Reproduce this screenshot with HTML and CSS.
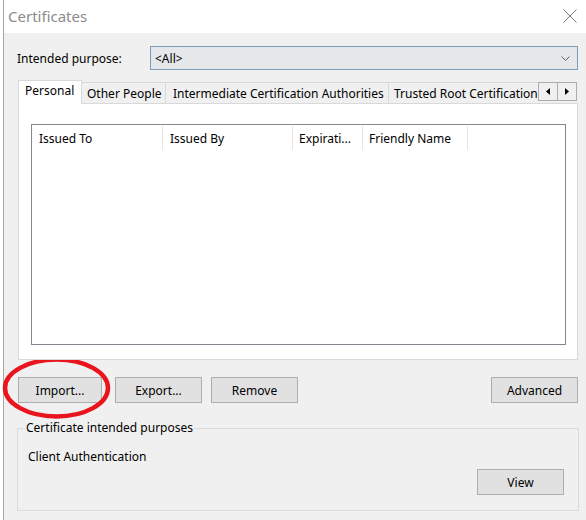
FILE: index.html
```html
<!DOCTYPE html>
<html>
<head>
<meta charset="utf-8">
<link rel="stylesheet" href="styles.css">
</head>
<body>
<div class="window">
  <div class="titlebar">
    <span class="title">Certificates</span>
    <svg class="close" width="14" height="14" viewBox="0 0 14 14"><path d="M0.5 0.5 L13.5 13.5 M13.5 0.5 L0.5 13.5" stroke="#7a7a7a" stroke-width="1" fill="none"/></svg>
  </div>
  <div class="content">
    <div class="purpose-row">
      <span class="purpose-label">Intended purpose:</span>
      <div class="combo">
        <span class="combo-text">&lt;All&gt;</span>
        <svg class="chev" width="9" height="5" viewBox="0 0 9 5"><path d="M0.5 0.5 L4.5 4.5 L8.5 0.5" stroke="#606060" stroke-width="1" fill="none"/></svg>
      </div>
    </div>
    <div class="tabs">
      <div class="tab active t1">Personal</div>
      <div class="tab t2">Other People</div>
      <div class="tab t3">Intermediate Certification Authorities</div>
      <div class="tab t4">Trusted Root Certification</div>
      <div class="tab-scroll">
        <div class="arrow-btn"><svg width="4" height="7" viewBox="0 0 4 7"><path d="M4 0 L0 3.5 L4 7 Z" fill="#000"/></svg></div>
        <div class="arrow-btn"><svg width="4" height="7" viewBox="0 0 4 7"><path d="M0 0 L4 3.5 L0 7 Z" fill="#000"/></svg></div>
      </div>
    </div>
    <div class="panel">
      <div class="listview">
        <div class="lv-header">
          <div class="col c1">Issued To</div>
          <div class="col c2">Issued By</div>
          <div class="col c3">Expirati...</div>
          <div class="col c4">Friendly Name</div>
        </div>
      </div>
    </div>
    <div class="button-row">
      <button class="btn b-import">Import...</button>
      <button class="btn b-export">Export...</button>
      <button class="btn b-remove">Remove</button>
      <span class="spacer"></span>
      <button class="btn b-adv">Advanced</button>
    </div>
    <fieldset class="group">
      <legend class="legend">Certificate intended purposes</legend>
      <div class="group-text">Client Authentication</div>
      <div class="group-actions"><button class="btn b-view">View</button></div>
    </fieldset>
  </div>
</div>
<svg class="circle" width="116" height="68" viewBox="0 0 116 68"><ellipse cx="56.5" cy="33" rx="51.5" ry="28.5" fill="none" stroke="#e8141e" stroke-width="4.5"/></svg>
</body>
</html>
```

FILE: styles.css
```css
html, body {
  margin: 0;
  padding: 0;
  background: #ffffff;
}
body {
  width: 586px;
  height: 520px;
  overflow: hidden;
  position: relative;
  font-family: "Noto Sans", "Open Sans", sans-serif;
  font-size: 12px;
  color: #000;
}
.window {
  margin-left: 3px;
  border-left: 1px solid #a6a6a6;
  height: 520px;
  display: flex;
  flex-direction: column;
}
.titlebar {
  height: 33px;
  background: #fff;
  display: flex;
  align-items: center;
  justify-content: space-between;
  padding: 0 9px 0 4px;
  flex: none;
}
.title {
  font-size: 15px;
  color: #8c8c8c;
  margin-top: -1px;
}
.close {
  display: block;
  margin-top: -1px;
}
.content {
  flex: 1;
  background: #f0f0f0;
  padding: 13px 8px 0 13px;
}
.purpose-row {
  display: flex;
  align-items: center;
  height: 24px;
}
.purpose-label {
  width: 133px;
  flex: none;
}
.combo {
  flex: 1;
  height: 24px;
  box-sizing: border-box;
  border: 1px solid #7f9db9;
  background: #e5e7ea;
  display: flex;
  align-items: center;
  justify-content: space-between;
  padding: 0 7px 0 4px;
}
.chev { display: block; }
.tabs {
  margin-top: 10px;
  margin-left: 1px;
  height: 23px;
  display: flex;
  align-items: flex-end;
  position: relative;
}
.tab {
  box-sizing: border-box;
  height: 21px;
  border-top: 1px solid #d9d9d9;
  border-right: 1px solid #d9d9d9;
  background: #f0f0f0;
  padding: 3px 0 0 5px;
  line-height: 16px;
  white-space: nowrap;
  overflow: hidden;
  flex: none;
}
.tab.active {
  height: 24px;
  margin-bottom: -1px;
  background: #fff;
  border-left: 1px solid #d9d9d9;
  padding-left: 6px;
  padding-top: 2px;
  position: relative;
  z-index: 2;
}
.t1 { width: 64px; }
.t2 { width: 84px; }
.t3 { width: 223px; padding-left: 7px; }
.t4 { flex: 1; min-width: 0; border-right: none; }
.tab-scroll {
  align-self: flex-start;
  margin-top: 2px;
  margin-right: 1px;
  display: flex;
  height: 19px;
  box-sizing: border-box;
  border: 1px solid #adadad;
  background: #f0f0f0;
  flex: none;
}
.arrow-btn {
  width: 18px;
  display: flex;
  align-items: center;
  justify-content: center;
}
.arrow-btn + .arrow-btn {
  border-left: 1px solid #adadad;
}
.arrow-btn svg { display: block; }
.panel {
  margin-left: 1px;
  width: 560px;
  height: 257px;
  box-sizing: border-box;
  border: 1px solid #d9d9d9;
  background: #fff;
  padding: 20px 11px 14px 12px;
  display: flex;
  position: relative;
  z-index: 1;
}
.listview {
  flex: 1;
  border: 1px solid #828790;
  background: #fff;
}
.lv-header {
  display: flex;
  height: 24px;
  padding-top: 1px;
}
.col {
  box-sizing: border-box;
  border-right: 1px solid #e5e5e5;
  padding: 5px 0 0 7px;
  line-height: 16px;
  white-space: nowrap;
}
.c1 { width: 131px; }
.c2 { width: 130px; }
.c3 { width: 70px; padding-left: 6px; }
.c4 { width: 105px; padding-left: 6px; }
.button-row {
  display: flex;
  margin-top: 17px;
  margin-left: 1px;
}
.btn {
  font-family: inherit;
  font-size: 12px;
  color: #000;
  height: 26px;
  box-sizing: border-box;
  border: 1px solid #adadad;
  background: #e1e1e1;
  padding: 1px 0 0 0;
  margin: 0;
  line-height: 16px;
  border-radius: 0;
}
.b-import { width: 84px; }
.b-export { width: 87px; margin-left: 13px; }
.b-remove { width: 87px; margin-left: 9px; }
.spacer { flex: 1; }
.b-adv { width: 87px; margin-right: 0; }
.group {
  margin: 17px 0 0 0;
  width: 562px;
  box-sizing: border-box;
  border: 1px solid #dcdcdc;
  padding: 13px 14px 15px 10px;
  min-width: 0;
}
.legend {
  padding: 0 1px;
  margin-left: -3px;
  line-height: 16px;
}
.group-text {
  line-height: 16px;
}
.group-actions {
  display: flex;
  justify-content: flex-end;
  margin-top: 4px;
}
.b-view { width: 87px; }
.circle {
  position: absolute;
  left: 0;
  top: 355px;
}
```
